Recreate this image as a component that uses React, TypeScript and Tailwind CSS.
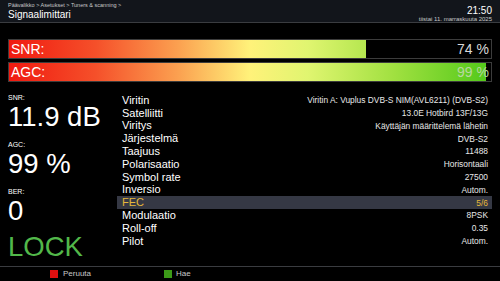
const rows: { label: string; value: string; active?: boolean }[] = [
  { label: 'Viritin', value: 'Viritin A: Vuplus DVB-S NIM(AVL6211) (DVB-S2)' },
  { label: 'Satelliitti', value: '13.0E Hotbird 13F/13G' },
  { label: 'Viritys', value: 'Käyttäjän määrittelemä lähetin' },
  { label: 'Järjestelmä', value: 'DVB-S2' },
  { label: 'Taajuus', value: '11488' },
  { label: 'Polarisaatio', value: 'Horisontaali' },
  { label: 'Symbol rate', value: '27500' },
  { label: 'Inversio', value: 'Autom.' },
  { label: 'FEC', value: '5/6', active: true },
  { label: 'Modulaatio', value: '8PSK' },
  { label: 'Roll-off', value: '0.35' },
  { label: 'Pilot', value: 'Autom.' },
];

function Bar({ label, percent, valueClass }: { label: string; percent: number; valueClass: string }) {
  return (
    <div className="relative h-[20px] border border-[#3c3c3c] bg-black">
      <div className="absolute inset-y-0 left-0 overflow-hidden" style={{ width: `${percent}%` }}>
        <div
          className="h-full bg-[linear-gradient(to_right,#f01a10_0%,#f5502a_18%,#fba050_35%,#fff27a_50%,#e0f570_62%,#a0e040_80%,#50c818_100%)]"
          style={{ width: `${(100 / percent) * 100}%` }}
        />
      </div>
      <div className="relative flex h-full items-center justify-between px-[2px] text-[14px] leading-none">
        <span className="text-white">{label}</span>
        <span className={valueClass}>{percent} %</span>
      </div>
    </div>
  );
}

export default function App() {
  return (
    <div className="flex h-[281px] w-[500px] flex-col overflow-hidden bg-black font-['Liberation_Sans',Arial,sans-serif]">
      <header className="flex h-[23px] justify-between border-b border-[#3a3c40] bg-[#12151b] px-[8px] pt-[2px]">
        <div className="flex flex-col">
          <span className="text-[5.5px] leading-[7px] text-[#c8c8c8]">Päävalikko &gt; Asetukset &gt; Tuners &amp; scanning &gt;</span>
          <span className="text-[10px] leading-[11px] text-white">Signaalimittari</span>
        </div>
        <div className="flex flex-col items-end pt-[4px]">
          <span className="text-[10px] leading-[10px] text-white">21:50</span>
          <span className="text-[6px] leading-[7px] text-[#c8c8c8]">tiistai 11. marraskuuta 2025</span>
        </div>
      </header>

      <div className="flex flex-col gap-[3px] px-[8px] pt-[16px]">
        <Bar label="SNR:" percent={74} valueClass="text-[#d8d8d8]" />
        <Bar label="AGC:" percent={99} valueClass="text-[#b8d8a0]" />
      </div>

      <div className="flex flex-1 pt-[12px]">
        <div className="flex w-[117px] flex-col pl-[8px] text-white">
          <span className="text-[7px] leading-[8px]">SNR:</span>
          <span className="text-[27.5px] leading-[30px]">11.9 dB</span>
          <span className="mt-[9px] text-[7px] leading-[8px]">AGC:</span>
          <span className="text-[27.5px] leading-[30px]">99 %</span>
          <span className="mt-[9px] text-[7px] leading-[8px]">BER:</span>
          <span className="text-[27.5px] leading-[30px]">0</span>
          <span className="mt-[6px] text-[27.5px] leading-[30px] text-[#52b84a]">LOCK</span>
        </div>
        <div className="flex flex-1 flex-col pr-[8px]">
          {rows.map((r, i) => (
            <div
              key={i}
              className={`flex h-[12.8px] items-center justify-between pl-[5px] pr-[4px] ${r.active ? 'bg-[#353844]' : ''}`}
            >
              <span className={`text-[11px] leading-none ${r.active ? 'text-[#e6b83a]' : 'text-white'}`}>{r.label}</span>
              <span className={`text-[8.4px] leading-none ${r.active ? 'text-[#e6b83a]' : 'text-[#e8e8e8]'}`}>{r.value}</span>
            </div>
          ))}
        </div>
      </div>

      <footer className="flex h-[15px] items-center border-t border-[#3a3c40] pl-[50px] text-[8px] text-[#c8c8c8]">
        <span className="mr-[5px] h-[8px] w-[8px] bg-[#e01010]" />
        <span className="w-[101px]">Peruuta</span>
        <span className="mr-[4px] h-[8px] w-[8px] bg-[#3c9a18]" />
        <span>Hae</span>
      </footer>
    </div>
  );
}
